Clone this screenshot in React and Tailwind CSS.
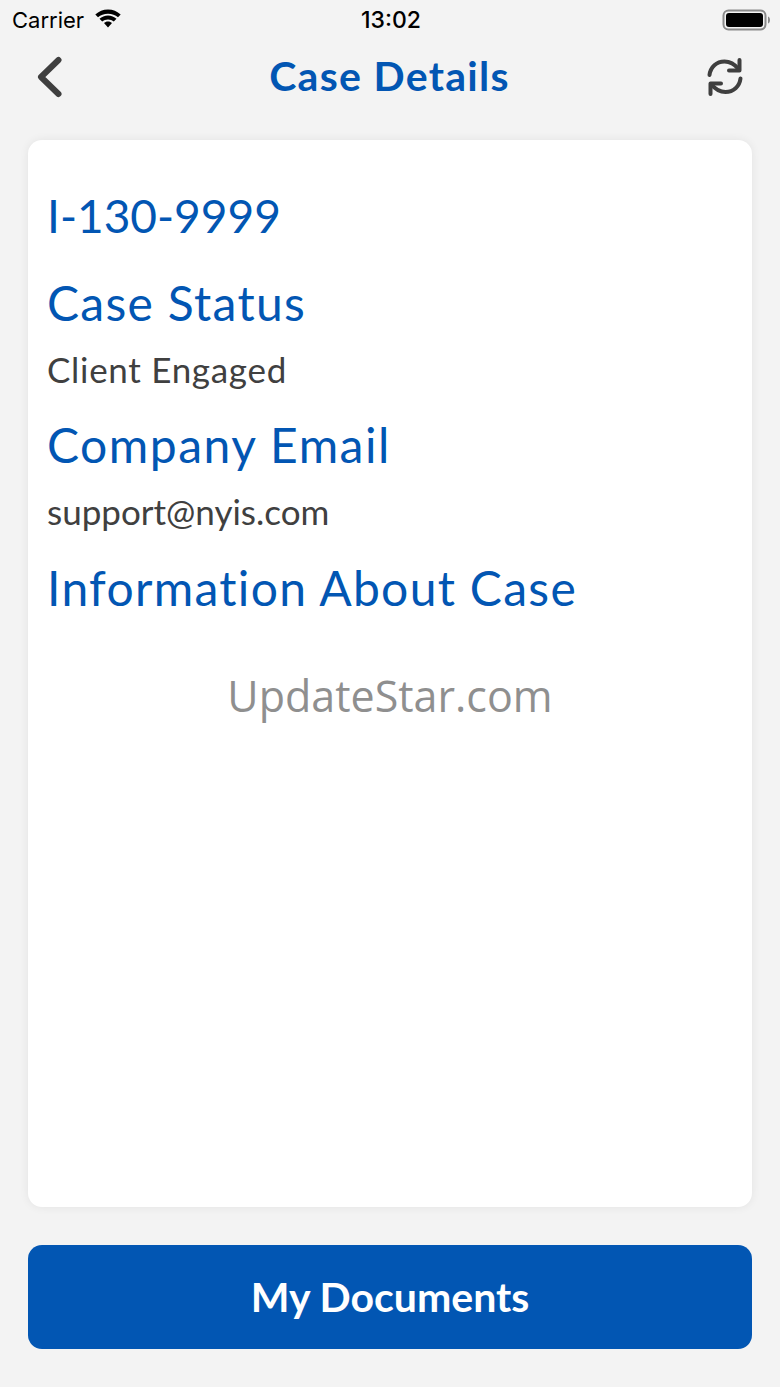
export default function App() {
  const av = "font-['Lato','Noto_Sans',sans-serif]";
  return (
    <div className={`w-[780px] h-[1387px] bg-[#f3f3f3] flex flex-col overflow-hidden ${av}`}>
      <div className="h-[40px] shrink-0 grid grid-cols-3 items-center pl-3 pr-[10px] text-black">
        <div className="flex items-center gap-[11px] font-['Inter',sans-serif] text-[22px] leading-none">
          <span>Carrier</span>
          <svg width="26" height="20" viewBox="0 0 26 20" fill="currentColor" className="-mt-[4px]">
            <path d="M13 1.500c4.900 0 9.300 1.900 12.700 5L23 9.300C20.400 7.100 16.900 5.700 13 5.700S5.600 7.100 3 9.300L.3 6.500C3.700 3.400 8.100 1.500 13 1.500z" />
            <path d="M13 7.500c3.300 0 6.300 1.300 8.500 3.300l-2.700 2.800c-1.500-1.300-3.600-2.100-5.800-2.100s-4.300.8-5.800 2.100l-2.700-2.800c2.200-2 5.200-3.300 8.500-3.300z" />
            <path d="M13 13.500c1.600 0 3 .6 4 1.600l-4 4.300-4-4.300c1-1 2.400-1.600 4-1.600z" />
          </svg>
        </div>
        <div className="text-center font-['Inter',sans-serif] text-[23px] font-medium leading-none">13:02</div>
        <div className="flex justify-end">
          <svg width="48" height="22" viewBox="0 0 48 22">
            <rect x="1.500" y="1.500" width="42" height="19" rx="5" fill="none" stroke="#8a8a8a" strokeWidth="2" />
            <rect x="4" y="4" width="37" height="14" rx="3" fill="#000" />
            <path d="M46 7.500c1.300.5 2 1.800 2 3.500s-.7 3-2 3.500z" fill="#8a8a8a" />
          </svg>
        </div>
      </div>

      <div className="h-[73px] shrink-0 grid grid-cols-[1fr_auto_1fr] items-center pl-[36px] pr-[37px]">
        <svg width="26" height="42" viewBox="0 0 26 42" fill="none" stroke="#3f3f3f" strokeWidth="6" strokeLinecap="round" strokeLinejoin="round">
          <path d="M22.500 4 5 21l17.500 17" />
        </svg>
        <h1 className="text-[41px] leading-none font-bold tracking-[1.3px] -mt-[2px] text-[#0256b3]">Case Details</h1>
        <svg className="justify-self-end" width="36" height="38" viewBox="0 0 36 38" fill="none" stroke="#3f3f3f" strokeWidth="4" strokeLinecap="round" strokeLinejoin="round">
          <path d="M2.500 17C3.500 9 9.500 3.500 17.500 3.500c5.500 0 10 2.500 14 7.500" />
          <path d="M32.500 2v10.500H22" />
          <path d="M33.500 20.500c-1 8-7 13.500-15 13.500-5.500 0-10-2.500-14-7.500" />
          <path d="M3.500 36V25.500H14" />
        </svg>
      </div>

      <div className="mx-[28px] h-[1067px] shrink-0 mt-[27px] bg-white rounded-[14px] shadow-[0_0_10px_rgba(0,0,0,0.07)] pl-[19px] pt-[46px] flex flex-col">
        <div className="text-[46px] leading-[60px] text-[#0256b3]">I-130-9999</div>
        <div className="text-[48px] leading-[60px] tracking-[1.3px] mt-[27px] text-[#0256b3]">Case Status</div>
        <div className="text-[35px] leading-[44px] tracking-[0.7px] mt-[14px] text-[#404040]">Client Engaged</div>
        <div className="text-[48px] leading-[60px] tracking-[1.5px] mt-[24px] text-[#0256b3]">Company Email</div>
        <div className="text-[35px] leading-[44px] mt-[14px] text-[#404040]">support@nyis.com</div>
        <div className="text-[48px] leading-[60px] tracking-[1.3px] mt-[25px] text-[#0256b3]">Information About Case</div>
        <div className="-ml-[19px] mt-[48px] text-center font-['Open_Sans',sans-serif] text-[43px] leading-[60px] text-[#8f8f8f]">UpdateStar.com</div>
      </div>

      <button className="mx-[28px] mt-[38px] h-[104px] shrink-0 rounded-[14px] bg-[#0256b3] text-white text-[41px] font-bold leading-none pb-[2px]">
        My Documents
      </button>
    </div>
  );
}
